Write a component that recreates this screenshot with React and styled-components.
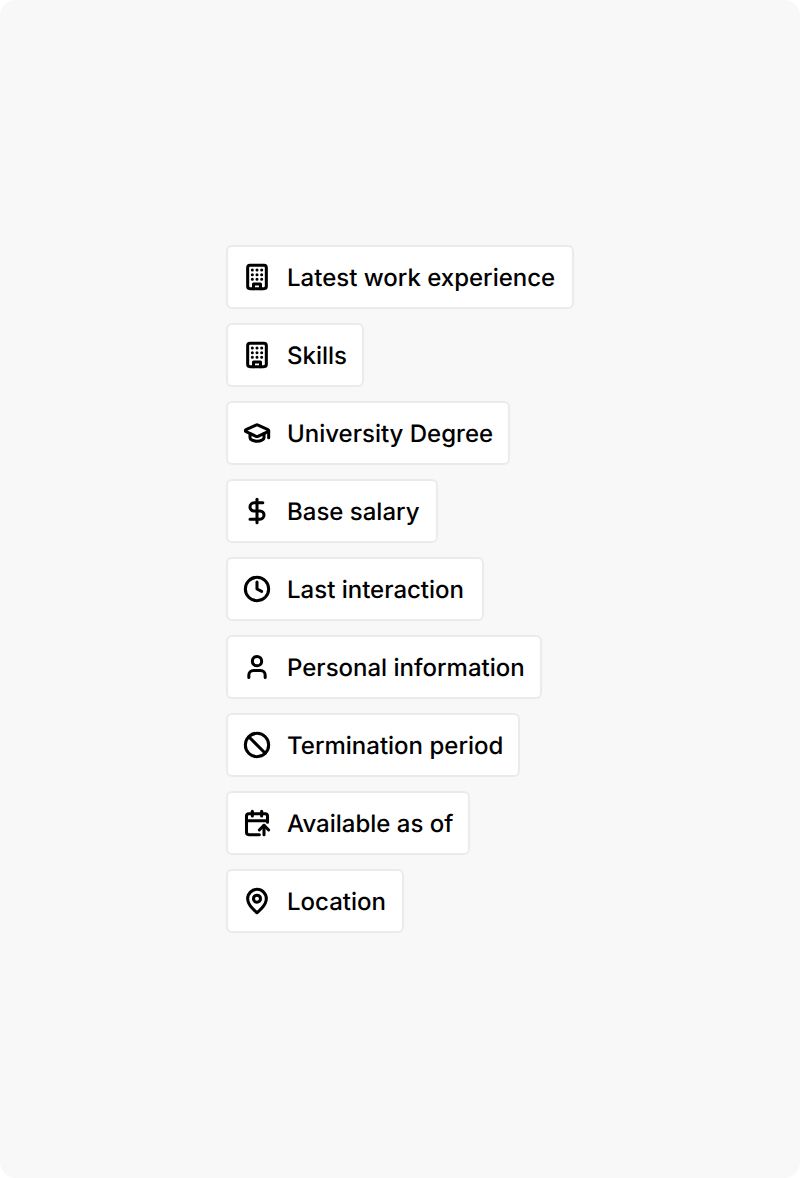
import React from 'react'
import styled, { createGlobalStyle } from 'styled-components'
import { Ban, CalendarArrowUp, Clock, DollarSign, GraduationCap, User } from 'lucide-react'

const GlobalStyle = createGlobalStyle`
    body {
        margin: 0;
        background: #ffffff;
    }
`

const BuildingIcon = ({ size, strokeWidth }) => (
    <svg width={size} height={size} viewBox="0 0 24 24" fill="none" stroke="currentColor" strokeWidth={strokeWidth} strokeLinecap="round" strokeLinejoin="round">
        <rect x="4" y="2" width="16" height="20" rx="2" />
        <path d="M9 22v-4h6v4" />
        <path d="M8 6h.01M16 6h.01M12 6h.01M12 10h.01M12 14h.01M16 10h.01M16 14h.01M8 10h.01M8 14h.01" />
    </svg>
)

const PinIcon = ({ size, strokeWidth }) => (
    <svg width={size} height={size} viewBox="0 0 24 24" fill="none" stroke="currentColor" strokeWidth={strokeWidth} strokeLinecap="round" strokeLinejoin="round">
        <path d="M20 10c0 6-8 12-8 12s-8-6-8-12a8 8 0 0 1 16 0Z" />
        <circle cx="12" cy="10" r="3" />
    </svg>
)

const fields = [
    { label: 'Latest work experience', icon: BuildingIcon, width: 348 },
    { label: 'Skills', icon: BuildingIcon, width: 138 },
    { label: 'University Degree', icon: GraduationCap, width: 284 },
    { label: 'Base salary', icon: DollarSign, width: 212 },
    { label: 'Last interaction', icon: Clock, width: 258 },
    { label: 'Personal information', icon: User, width: 316 },
    { label: 'Termination period', icon: Ban, width: 294 },
    { label: 'Available as of', icon: CalendarArrowUp, width: 244 },
    { label: 'Location', icon: PinIcon, width: 178 }
]

const App = () => (
    <Panel>
        <GlobalStyle />
        <FieldList>
            {fields.map(({ label, icon: Icon, width }) => (
                <Field key={label} $width={width}>
                    <Icon size={28} strokeWidth={2.6} />
                    <Label>{label}</Label>
                </Field>
            ))}
        </FieldList>
    </Panel>
)

const Panel = styled.main`
    display: flex;
    align-items: center;
    justify-content: center;
    height: 1178px;
    border-radius: 16px;
    background: #f8f8f8;
`

const FieldList = styled.ul`
    display: flex;
    flex-direction: column;
    align-items: flex-start;
    gap: 14px;
    margin: 0;
    padding: 0;
    list-style: none;
`

const Field = styled.li`
    box-sizing: border-box;
    display: flex;
    align-items: center;
    gap: 16px;
    width: ${({ $width }) => $width}px;
    height: 64px;
    padding: 0 15px;
    border: 2px solid #ebebeb;
    border-radius: 6px;
    background: #ffffff;
    color: #000000;

    svg {
        flex: none;
    }
`

const Label = styled.span`
    padding-top: 2px;
    font-family: Inter, sans-serif;
    font-size: 24px;
    font-weight: 450;
    line-height: 32px;
    text-rendering: geometricPrecision;
    white-space: nowrap;
`

export default App
